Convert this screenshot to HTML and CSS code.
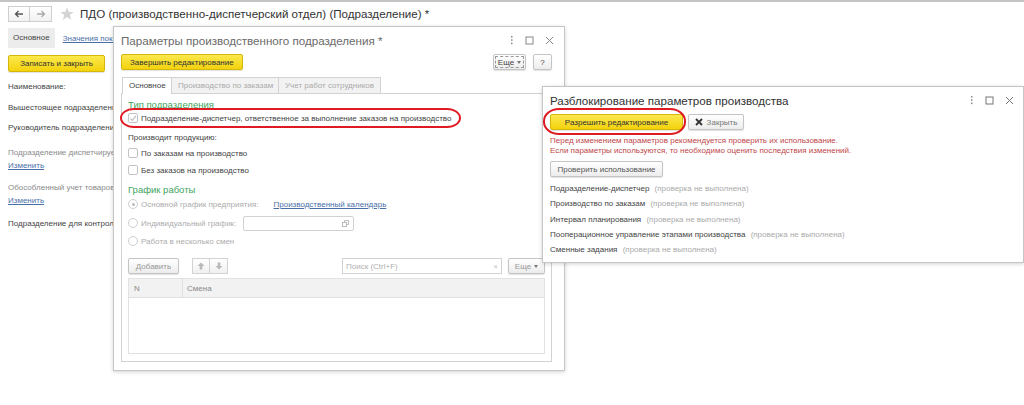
FILE: index.html
```html
<!DOCTYPE html>
<html lang="ru">
<head>
<meta charset="utf-8">
<title>ПДО</title>
<link rel="stylesheet" href="styles.css">
</head>
<body>
<div class="page">
  <header class="head">
    <div class="nav">
      <span class="nav-btn"><svg width="10" height="8" viewBox="0 0 10 8"><path d="M9 4H1.5M4.5 1L1.5 4L4.5 7" fill="none" stroke="#555" stroke-width="1.3"/></svg></span>
      <span class="nav-btn"><svg width="10" height="8" viewBox="0 0 10 8"><path d="M1 4H8.5M5.5 1L8.5 4L5.5 7" fill="none" stroke="#aaa" stroke-width="1.3"/></svg></span>
    </div>
    <svg class="star" width="14" height="14" viewBox="0 0 14 14"><path d="M7 0.5L8.9 5H13.6L9.8 8L11.2 13L7 10L2.8 13L4.2 8L0.4 5H5.1Z" fill="#d4d4d4"/></svg>
    <h1 class="title">ПДО (производственно-диспетчерский отдел) (Подразделение) *</h1>
  </header>

  <div class="formtabs">
    <span class="ftab">Основное</span>
    <a class="flink">Значения показателей</a>
  </div>

  <div class="cmd"><span class="btn yellow big">Записать и закрыть</span></div>

  <div class="fields">
    <div class="field">Наименование:</div>
    <div class="field f2">Вышестоящее подразделение:</div>
    <div class="field f-gap">Руководитель подразделения:</div>
    <div class="group">
      <div class="field muted">Подразделение диспетчирует</div>
      <a class="link">Изменить</a>
    </div>
    <div class="group">
      <div class="field muted">Обособленный учет товаров</div>
      <a class="link">Изменить</a>
    </div>
    <div class="field f-last">Подразделение для контроля</div>
  </div>

  <!-- Window 1 -->
  <section class="win win-params">
    <div class="win-head">
      <span class="win-title muted-title">Параметры производственного подразделения *</span>
      <div class="win-ctrls">
        <svg width="4" height="10" viewBox="0 0 4 10"><rect x="1" y="1" width="1.5" height="1.5" fill="#888"/><rect x="1" y="4.3" width="1.5" height="1.5" fill="#888"/><rect x="1" y="7.6" width="1.5" height="1.5" fill="#888"/></svg>
        <svg width="9" height="9" viewBox="0 0 9 9"><rect x="1" y="1" width="7" height="7" fill="none" stroke="#888"/></svg>
        <svg width="9" height="9" viewBox="0 0 9 9"><path d="M1 1L8 8M8 1L1 8" stroke="#888" stroke-width="1"/></svg>
      </div>
    </div>
    <div class="win-bar">
      <span class="btn yellow">Завершить редактирование</span>
      <div class="bar-right">
        <span class="btn focus">Еще <i class="caret"></i></span>
        <span class="btn q">?</span>
      </div>
    </div>
    <div class="tabs">
      <span class="tab active">Основное</span>
      <span class="tab">Производство по заказам</span>
      <span class="tab">Учет работ сотрудников</span>
    </div>
    <div class="panel">
      <div class="group-title">Тип подразделения</div>
      <label class="check-row first-check"><span class="cb checked"><svg width="9" height="9" viewBox="0 0 9 9"><path d="M1.5 4.5L3.7 6.8L7.8 1.5" fill="none" stroke="#b5b5b5" stroke-width="1.2"/></svg></span><span>Подразделение-диспетчер, ответственное за выполнение заказов на производство</span></label>
      <div class="plain">Производит продукцию:</div>
      <label class="check-row after-plain"><span class="cb"></span><span>По заказам на производство</span></label>
      <label class="check-row"><span class="cb"></span><span>Без заказов на производство</span></label>
      <div class="group-title gt2">График работы</div>
      <div class="radio-row"><span class="rb on"></span><span class="dim">Основной график предприятия:</span><a class="cal-link">Производственный календарь</a></div>
      <div class="radio-row r2"><span class="rb"></span><span class="dim">Индивидуальный график:</span><span class="inp"><svg width="7" height="7" viewBox="0 0 7 7"><rect x="0.5" y="2.5" width="4" height="4" fill="none" stroke="#bbb"/><path d="M2.5 2.5V0.5H6.5V4.5H4.5" fill="none" stroke="#bbb"/></svg></span></div>
      <div class="radio-row r3"><span class="rb"></span><span class="dim">Работа в несколько смен</span></div>
      <div class="tbl-bar">
        <span class="btn gray">Добавить</span>
        <span class="arrows">
          <span class="arr"><svg width="8" height="8" viewBox="0 0 8 8"><path d="M4 0.5L7.5 4H5.3V7.5H2.7V4H0.5Z" fill="#b8b8b8"/></svg></span><span class="arr"><svg width="8" height="8" viewBox="0 0 8 8"><path d="M4 7.5L7.5 4H5.3V0.5H2.7V4H0.5Z" fill="#b8b8b8"/></svg></span>
        </span>
        <span class="search"><span class="ph">Поиск (Ctrl+F)</span><span class="x">×</span></span>
        <span class="btn gray more">Еще <i class="caret"></i></span>
      </div>
      <div class="table">
        <div class="thead"><span class="c-n">N</span><span class="c-s">Смена</span></div>
        <div class="tbody"></div>
      </div>
    </div>
  </section>

  <!-- Window 2 -->
  <section class="win win-unlock">
    <div class="win-head">
      <span class="win-title">Разблокирование параметров производства</span>
      <div class="win-ctrls">
        <svg width="4" height="10" viewBox="0 0 4 10"><rect x="1" y="1" width="1.5" height="1.5" fill="#888"/><rect x="1" y="4.3" width="1.5" height="1.5" fill="#888"/><rect x="1" y="7.6" width="1.5" height="1.5" fill="#888"/></svg>
        <svg width="9" height="9" viewBox="0 0 9 9"><rect x="1" y="1" width="7" height="7" fill="none" stroke="#777"/></svg>
        <svg width="9" height="9" viewBox="0 0 9 9"><path d="M1 1L8 8M8 1L1 8" stroke="#777" stroke-width="1"/></svg>
      </div>
    </div>
    <div class="win-bar bar2">
      <span class="btn yellow wide">Разрешить редактирование</span>
      <span class="btn gray close"><svg width="8" height="8" viewBox="0 0 8 8"><path d="M1 1L7 7M7 1L1 7" stroke="#333" stroke-width="1.8"/></svg>Закрыть</span>
    </div>
    <div class="warn">
      <div>Перед изменением параметров рекомендуется проверить их использование.</div>
      <div>Если параметры используются, то необходимо оценить последствия изменений.</div>
    </div>
    <div class="check-btn"><span class="btn gray">Проверить использование</span></div>
    <ul class="params">
      <li>Подразделение-диспетчер <span class="note">(проверка не выполнена)</span></li>
      <li>Производство по заказам <span class="note">(проверка не выполнена)</span></li>
      <li>Интервал планирования <span class="note">(проверка не выполнена)</span></li>
      <li>Пооперационное управление этапами производства <span class="note">(проверка не выполнена)</span></li>
      <li>Сменные задания <span class="note">(проверка не выполнена)</span></li>
    </ul>
  </section>

  <span class="mark mark1"></span>
  <span class="mark mark2"></span>
</div>
</body>
</html>
```

FILE: styles.css
```css
* { box-sizing: border-box; }
html, body { margin: 0; padding: 0; }
body {
  width: 1024px;
  height: 405px;
  overflow: hidden;
  background: #fff;
  font-family: "Liberation Sans", Arial, sans-serif;
  font-size: 8px;
  color: #444;
}
.page {
  position: relative;
  width: 1024px;
  height: 405px;
  border-top: 2px solid #c4c4c4;
}

/* header */
.head {
  display: flex;
  align-items: center;
  height: 23px;
  padding-left: 8px;
}
.nav { display: flex; height: 16px; }
.nav-btn {
  width: 22px;
  height: 16px;
  display: flex;
  align-items: center;
  justify-content: center;
  border: 1px solid #cfcfcf;
  background: linear-gradient(#fff, #f1f1f1);
}
.nav-btn + .nav-btn { border-left: none; }
.star { margin-left: 8px; }
.title {
  margin: 0 0 0 6px;
  font-size: 11.6px;
  font-weight: normal;
  color: #333;
  white-space: nowrap;
}

.formtabs {
  display: flex;
  align-items: center;
  height: 20px;
  margin-top: 3px;
  padding-left: 8px;
}
.ftab {
  height: 20px;
  line-height: 20px;
  padding: 0 5px;
  background: #ececec;
  color: #444;
}
.flink {
  margin-left: 8px;
  color: #4a6fa8;
  text-decoration: underline;
  white-space: nowrap;
}

.cmd { padding: 7px 0 0 8px; }

.btn {
  display: inline-flex;
  align-items: center;
  justify-content: center;
  height: 16px;
  padding: 0 8px;
  border-radius: 2px;
  border: 1px solid #c4c4c4;
  background: linear-gradient(#fff, #ececec);
  color: #444;
  box-shadow: 0 1px 1px rgba(0,0,0,0.12);
  white-space: nowrap;
}
.btn.yellow {
  background: linear-gradient(#fbe84d, #f3d20d);
  border-color: #d6b70c;
  color: #333;
}
.btn.big { height: 17px; width: 97px; }

.fields { padding-left: 8px; white-space: nowrap; }
.field { height: 12px; line-height: 12px; margin-top: 7px; color: #444; }
.fields > .field:first-child { margin-top: 9px; }
.f2 { margin-top: 9px; }
.f-gap { margin-top: 8px; }
.group { margin-top: 13px; }
.group .field { margin-top: 0; }
.group + .group { margin-top: 10px; }
.muted { color: #8a8a8a; }
.link {
  display: block;
  width: max-content;
  height: 12px;
  line-height: 12px;
  margin-top: 1px;
  color: #4a6fa8;
  text-decoration: underline;
}
.f-last { margin-top: 11px; }

/* windows */
.win {
  position: absolute;
  background: #fff;
  border: 1px solid #c6c6c6;
  box-shadow: 0 1px 4px rgba(0,0,0,0.18);
}
.win-params { left: 113px; top: 24px; width: 452px; height: 345px; padding: 0 12px 0 7px; }
.win-unlock { left: 542px; top: 84px; width: 482px; height: 177px; padding: 0 11px 0 7px; }

.win-head {
  display: flex;
  align-items: center;
  justify-content: space-between;
  height: 26px;
}
.win-title { font-size: 11.6px; color: #333; white-space: nowrap; }
.muted-title { color: #6a6a6a; }
.win-ctrls {
  display: flex;
  align-items: center;
  gap: 11px;
  margin-right: -2px;
}
.win-bar {
  display: flex;
  align-items: center;
  height: 18px;
}
.bar-right { margin-left: auto; display: flex; gap: 7px; }
.btn.focus {
  padding: 0 4px;
  width: 33px;
  outline: 1px dashed #999;
  outline-offset: -3px;
}
.btn.q { width: 19px; padding: 0; }
.caret {
  display: inline-block;
  width: 0; height: 0;
  margin-left: 3px;
  border-left: 2px solid transparent;
  border-right: 2px solid transparent;
  border-top: 3px solid #777;
}

.tabs {
  display: flex;
  margin-top: 6px;
  height: 16px;
  padding-left: 1px;
}
.tab {
  height: 16px;
  line-height: 15px;
  padding: 0 6px;
  border: 1px solid #d2d2d2;
  border-bottom: none;
  background: #f2f2f2;
  color: #aaa;
  white-space: nowrap;
  text-align: center;
}
.tab + .tab { border-left: none; }
.tab:nth-child(2) { width: 107px; }
.tab:nth-child(3) { width: 102px; }
.tab.active { background: #fff; color: #444; width: 50px; margin-bottom: -1px; height: 17px; position: relative; text-align: left; }

.panel {
  height: 269px;
  border: 1px solid #d2d2d2;
  padding: 0 6px;
}
.group-title {
  margin-top: 5px;
  font-size: 9.5px;
  line-height: 12px;
  color: #3da55e;
}
.gt2 { margin-top: 8px; }
.check-row {
  display: flex;
  align-items: center;
  height: 12px;
  gap: 3px;
  margin-top: 5px;
  white-space: nowrap;
}
.first-check { margin-top: 1px; }
.cb {
  width: 10px; height: 10px;
  border: 1px solid #c4c4c4;
  border-radius: 2px;
  background: #fff;
  display: flex; align-items: center; justify-content: center;
  flex: none;
}
.plain { height: 12px; line-height: 12px; margin-top: 8px; }
.check-row.after-plain { margin-top: 3px; }
.check-row + .check-row { margin-top: 5px; }

.radio-row {
  display: flex;
  align-items: center;
  height: 12px;
  margin-top: 2px;
  gap: 3px;
  white-space: nowrap;
}
.r2 { margin-top: 7px; }
.r3 { margin-top: 6px; }
.rb {
  width: 10px; height: 10px;
  border-radius: 50%;
  border: 1px solid #cfcfcf;
  background: #fff;
  position: relative;
  flex: none;
}
.rb.on::after {
  content: "";
  position: absolute;
  left: 2.5px; top: 2.5px;
  width: 3px; height: 3px;
  border-radius: 50%;
  background: #bbb;
}
.dim { color: #acacac; }
.cal-link { margin-left: 12px; color: #4a6fa8; text-decoration: underline; }
.inp {
  margin-left: 4px;
  width: 111px;
  height: 15px;
  border: 1px solid #d2d2d2;
  border-radius: 2px;
  display: flex;
  align-items: center;
  justify-content: flex-end;
  padding-right: 4px;
}

.tbl-bar {
  display: flex;
  align-items: center;
  height: 16px;
  margin-top: 11px;
}
.btn.gray { color: #777; }
.tbl-bar .btn.gray:first-child { width: 51px; padding: 0; color: #999; }
.arrows { display: flex; margin-left: 13px; }
.arr {
  width: 18px; height: 16px;
  border: 1px solid #d2d2d2;
  background: linear-gradient(#fff, #f0f0f0);
  display: flex; align-items: center; justify-content: center;
}
.arr + .arr { border-left: none; }
.search {
  margin-left: auto;
  width: 160px;
  height: 16px;
  border: 1px solid #d2d2d2;
  display: flex;
  align-items: center;
  justify-content: space-between;
  padding: 0 3px;
}
.ph { color: #b0b0b0; }
.x { color: #bbb; font-size: 8px; }
.more { margin-left: 6px; width: 37px; padding: 0; color: #999 !important; }

.table {
  margin-top: 4px;
  border: 1px solid #e2e2e2;
  height: 76px;
}
.thead {
  display: flex;
  height: 19px;
  align-items: center;
  background: #f2f2f2;
  border-bottom: 1px solid #e0e0e0;
  color: #888;
}
.c-n { width: 54px; padding-left: 5px; height: 100%; display: flex; align-items: center; border-right: 1px solid #e0e0e0; }
.c-s { padding-left: 4px; }

/* window 2 */
.btn.wide { width: 133px; padding: 0; }
.bar2 { gap: 5px; }
.close { width: 56px; padding: 0; color: #555; gap: 4px; }
.warn {
  margin-top: 5px;
  color: #c0464a;
  line-height: 10px;
  white-space: nowrap;
}
.check-btn { margin-top: 5px; }
.check-btn .btn { width: 113px; padding: 0; color: #555; }
.params { list-style: none; margin: 4px 0 0; padding: 0; white-space: nowrap; }
.params li { height: 15.25px; line-height: 15px; color: #444; }
.note { color: #aaa; margin-left: 3px; }

/* red marks */
.mark {
  position: absolute;
  border: 2.5px solid #e01a22;
  border-radius: 14px / 10px;
}
.mark1 { left: 120px; top: 106px; width: 341px; height: 20px; }
.mark2 { left: 543px; top: 106px; width: 143px; height: 27px; border-radius: 16px / 13px; }
```
